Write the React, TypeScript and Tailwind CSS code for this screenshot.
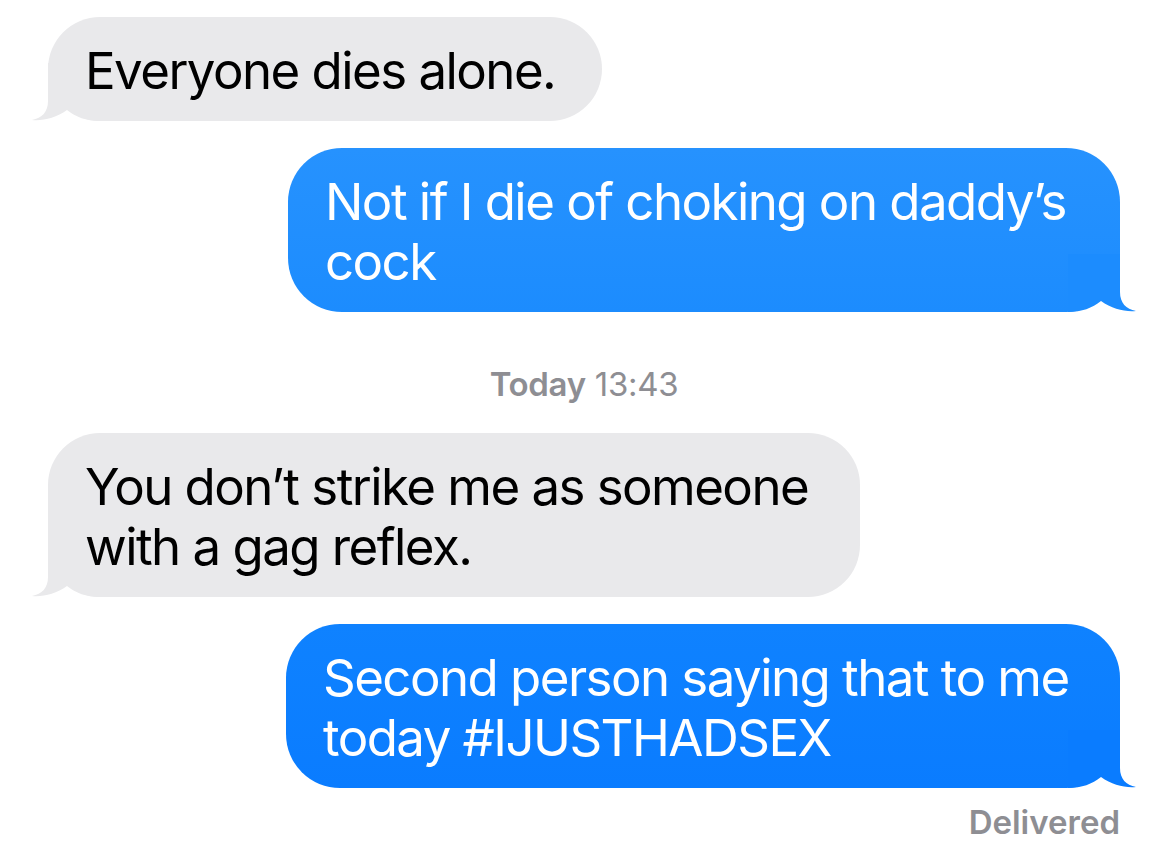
import React from "react";

const font = { fontFamily: 'Inter, "Noto Sans", sans-serif' };

function LeftTail({ color }: { color: string }) {
  return (
    <svg
      className="absolute left-0 bottom-0"
      width="70"
      height="60"
      viewBox="-18 -58 70 60"
      style={{ transform: "translate(-18px, 2px)" }}
    >
      <path
        d="M0,-58 L0,-20 C0,-9 -6,-3 -16,-1 C-5,0 8,-3 19,-11 C28,-4 38,0 52,0 L52,-58 Z"
        fill={color}
      />
    </svg>
  );
}

function RightTail({ color }: { color: string }) {
  return (
    <svg
      className="absolute right-0 bottom-0"
      width="70"
      height="60"
      viewBox="-52 -58 70 60"
      style={{ transform: "translate(18px, 2px)" }}
    >
      <path
        d="M0,-58 L0,-20 C0,-9 6,-3 16,-1 C5,0 -8,-3 -19,-11 C-28,-4 -38,0 -52,0 L-52,-58 Z"
        fill={color}
      />
    </svg>
  );
}

function Received({ children, w }: { children: React.ReactNode; w: string }) {
  return (
    <div className="flex justify-start">
      <div className={`relative rounded-[52px] bg-[#e9e9eb] pl-[37px] pr-[30px] pt-[24px] pb-[20px] ${w}`}>
        <LeftTail color="#e9e9eb" />
        <p className="relative text-[51px] leading-[60px] tracking-[-1.55px] text-black" style={font}>
          {children}
        </p>
      </div>
    </div>
  );
}

function Sent({ children, w, bg, tail }: { children: React.ReactNode; w: string; bg: string; tail: string }) {
  return (
    <div className="flex justify-end">
      <div className={`relative rounded-[54px] pl-[37px] pr-[30px] pt-[24px] pb-[20px] ${w} ${bg}`}>
        <RightTail color={tail} />
        <p className="relative text-[51px] leading-[60px] tracking-[-1.55px] text-white" style={font}>
          {children}
        </p>
      </div>
    </div>
  );
}

export default function App() {
  return (
    <div className="w-[1170px] h-[843px] overflow-hidden bg-white pt-[17px] pl-[48px] pr-[50px]">
      <div className="flex flex-col">
        <Received w="w-[554px]">Everyone dies alone.</Received>
        <div className="mt-[27px]">
          <Sent w="w-[832px]" bg="bg-gradient-to-b from-[#2692fe] to-[#1c8cfe]" tail="#1c8cfe">
            Not if I die of choking on daddy’s
            <br />
            cock
          </Sent>
        </div>
        <div
          className="mt-[53px] h-[40px] flex items-center justify-center text-[33px] text-[#8e8e93] tracking-[-0.3px]"
          style={font}
        >
          <span className="font-semibold">Today</span>
          <span className="ml-[9px]">13:43</span>
        </div>
        <div className="mt-[28px]">
          <Received w="w-[812px]">
            You don’t strike me as someone
            <br />
            with a gag reflex.
          </Received>
        </div>
        <div className="mt-[27px]">
          <Sent w="w-[834px]" bg="bg-gradient-to-b from-[#0f82ff] to-[#0a7cff]" tail="#0a7cff">
            Second person saying that to me
            <br />
            today #IJUSTHADSEX
          </Sent>
        </div>
        <div
          className="mt-[15px] h-[40px] flex items-center justify-end text-[33px] font-semibold text-[#8e8e93] tracking-[0px]"
          style={font}
        >
          Delivered
        </div>
      </div>
    </div>
  );
}
